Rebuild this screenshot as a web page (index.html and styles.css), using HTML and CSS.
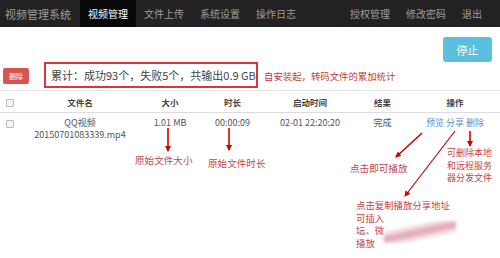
FILE: index.html
```html
<!DOCTYPE html>
<html lang="zh-CN">
<head>
    <meta charset="UTF-8">
    <meta name="viewport" content="width=device-width, initial-scale=1.0">
    <title>视频管理系统</title>
    <link rel="stylesheet" href="styles.css">
</head>
<body>
    <nav class="navbar">
        <span class="brand">视频管理系统</span>
        <ul class="nav">
            <li class="active">视频管理</li>
            <li>文件上传</li>
            <li>系统设置</li>
            <li>操作日志</li>
        </ul>
        <ul class="nav nav-right">
            <li>授权管理</li>
            <li>修改密码</li>
            <li>退出</li>
        </ul>
    </nav>

    <div class="toolbar">
        <button class="btn btn-stop">停止</button>
    </div>

    <div class="summary-row">
        <button class="btn btn-del">删除</button>
        <div class="summary-box">累计：成功93个，失败5个，共输出0.9 GB</div>
        <span class="note">自安装起，转码文件的累加统计</span>
    </div>

    <table class="files">
        <thead>
            <tr>
                <th class="col-check"><span class="checkbox"></span></th>
                <th class="col-name">文件名</th>
                <th class="col-size">大小</th>
                <th class="col-dur">时长</th>
                <th class="col-time">启动时间</th>
                <th class="col-result">结果</th>
                <th class="col-ops">操作</th>
            </tr>
        </thead>
        <tbody>
            <tr>
                <td><span class="checkbox"></span></td>
                <td>QQ视频<br>20150701083339.mp4</td>
                <td>1.01 MB</td>
                <td>00:00:09</td>
                <td>02-01 22:20:20</td>
                <td>完成</td>
                <td class="ops"><a>预览</a> <a>分享</a> <a>删除</a></td>
            </tr>
        </tbody>
    </table>

    <!-- annotations drawn over the screenshot -->
    <div class="notes">
        <svg class="arrows" width="500" height="258" viewBox="0 0 500 258">
            <defs>
                <marker id="head" markerWidth="6" markerHeight="6" refX="5" refY="3" orient="auto" markerUnits="userSpaceOnUse">
                    <path d="M0,0 L6,3 L0,6 Z" fill="#d00000"/>
                </marker>
            </defs>
            <line x1="168" y1="128" x2="168" y2="151" marker-end="url(#head)"/>
            <line x1="229" y1="128" x2="229" y2="150" marker-end="url(#head)"/>
            <line x1="422" y1="133" x2="396" y2="157" marker-end="url(#head)"/>
            <line x1="470" y1="131" x2="470" y2="146" marker-end="url(#head)"/>
            <line class="thin" x1="455" y1="131" x2="405" y2="196" marker-end="url(#head)"/>
        </svg>
        <span class="label lb-size">原始文件大小</span>
        <span class="label lb-dur">原始文件时长</span>
        <span class="label lb-play">点击即可播放</span>
        <span class="label lb-del">可删除本地<br>和远程服务<br>器分发文件</span>
        <span class="label lb-share">点击复制播放分享地址<br>可插入<br>坛、微<br>播放</span>
        <span class="smudge"></span>
    </div>
</body>
</html>
```

FILE: styles.css
```css
body {
    margin: 0;
    font-family: "Noto Sans CJK SC", "Open Sans", sans-serif;
    color: #333;
    background: #fff;
    position: relative;
    width: 500px;
    height: 258px;
    overflow: hidden;
}
.navbar {
    display: flex;
    align-items: stretch;
    height: 27px;
    background: #222;
    color: #9d9d9d;
    font-size: 10px;
}
.brand {
    display: flex;
    align-items: center;
    padding-left: 5px;
    width: 75px;
    font-size: 11px;
}
.nav {
    display: flex;
    margin: 0;
    padding: 0;
    list-style: none;
}
.nav li {
    display: flex;
    align-items: center;
    padding: 0 8px;
}
.nav .active {
    background: #080808;
    color: #fff;
}
.nav-right {
    margin-left: auto;
    margin-right: 10px;
}
.toolbar {
    display: flex;
    justify-content: flex-end;
    padding: 10px 8px 0;
}
.btn {
    border: none;
    color: #fff;
    font-family: inherit;
    cursor: pointer;
    padding: 0;
}
.btn-stop {
    width: 49px;
    height: 25px;
    background: #5bc0de;
    border-radius: 3px;
    font-size: 11px;
}
.summary-row {
    display: flex;
    align-items: center;
    height: 28px;
    border-bottom: 1px solid #e3e3e3;
}
.btn-del {
    width: 26px;
    height: 16px;
    margin-left: 3px;
    background: #d9534f;
    border-radius: 2px;
    font-size: 7px;
}
.summary-box {
    box-sizing: border-box;
    display: flex;
    align-items: center;
    width: 214px;
    height: 26px;
    margin: 0 6px 2px 15px;
    padding-left: 5px;
    border: 2px solid #d9363e;
    font-size: 11px;
    color: #444;
    white-space: nowrap;
}
.note {
    font-size: 9.4px;
    color: #c0393f;
    white-space: nowrap;
}
.files {
    width: 100%;
    border-collapse: collapse;
    font-size: 9px;
    color: #555;
}
.files th {
    height: 21px;
    padding: 0;
    font-weight: bold;
    font-size: 8.5px;
    color: #444;
    border-bottom: 1px solid #ddd;
}
.files td {
    padding: 4px 0 3px;
    text-align: center;
    vertical-align: top;
    line-height: 12px;
}
.col-check { width: 20px; }
.col-name { width: 120px; }
.col-size { width: 60px; }
.col-dur { width: 65px; }
.col-time { width: 90px; }
.col-result { width: 55px; }
.checkbox {
    display: inline-block;
    width: 6px;
    height: 6px;
    border: 1px solid #bbb;
    border-radius: 1px;
    background: #f4f4f4;
    vertical-align: middle;
}
.ops a {
    color: #5b8fc8;
}
.notes {
    position: absolute;
    top: 0;
    left: 0;
    width: 500px;
    height: 258px;
    pointer-events: none;
}
.arrows {
    position: absolute;
    top: 0;
    left: 0;
}
.arrows line {
    stroke: #d00000;
    stroke-width: 1.6;
}
.arrows .thin {
    stroke-width: 1.2;
}
.label {
    position: absolute;
    color: #c0464c;
    font-size: 9.6px;
    line-height: 12px;
    white-space: nowrap;
}
.lb-size { left: 135px; top: 154px; }
.lb-dur { left: 208px; top: 157px; }
.lb-play { left: 350px; top: 162px; }
.lb-del { left: 447px; top: 147px; font-size: 9px; line-height: 12.5px; }
.lb-share { left: 356px; top: 199px; font-size: 9.4px; line-height: 12.5px; }
.smudge {
    position: absolute;
    left: 384px;
    top: 221px;
    width: 72px;
    height: 22px;
    background: linear-gradient(168deg, rgba(255,255,255,0.95) 0%, rgba(255,255,255,0.9) 25%, rgba(214,130,150,0.75) 50%, rgba(255,255,255,0.9) 75%);
    filter: blur(1.5px);
}
```
